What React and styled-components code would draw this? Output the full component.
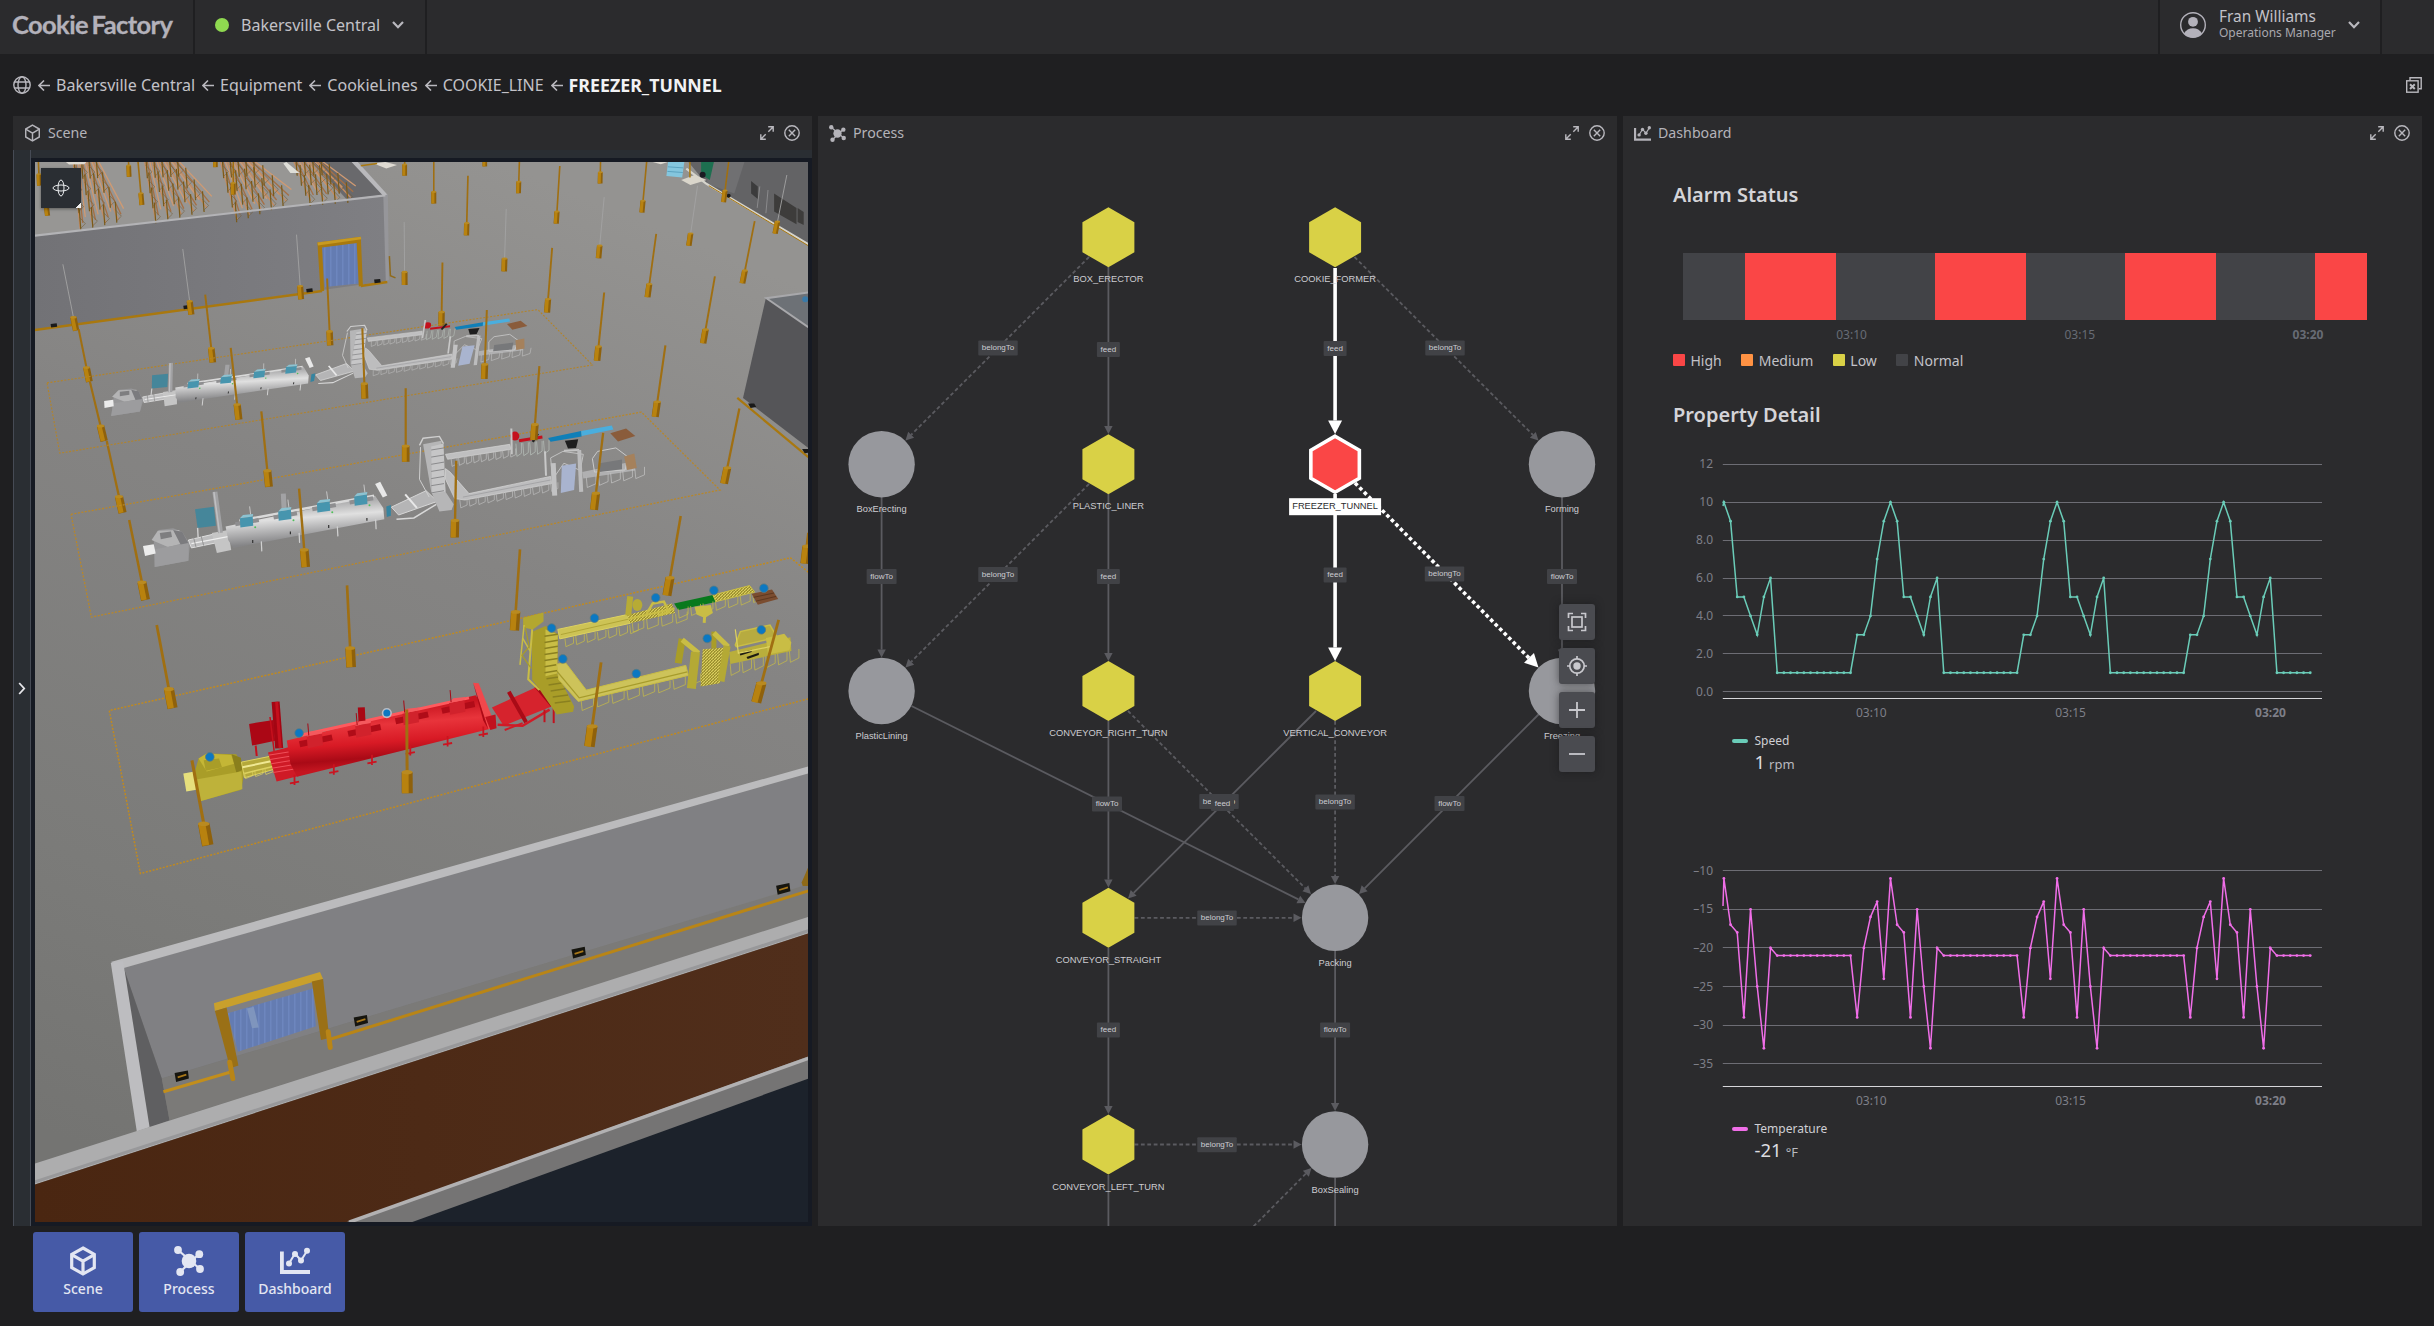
import React from "react";
import styled, { createGlobalStyle, css } from "styled-components";

const Global = createGlobalStyle`
  * { box-sizing: border-box; }
  html, body { margin: 0; padding: 0; background: #1f1f21; }
  body { font-family: "Noto Sans", "Open Sans", sans-serif; color: #c3c2c8; overflow: hidden; }
  button { font: inherit; color: inherit; background: none; border: 0; padding: 0; }
`;

/* ---------- shell ---------- */
const Page = styled.div`
  width: 2434px;
  height: 1326px;
  display: flex;
  flex-direction: column;
  background: #1f1f21;
`;
const TopBar = styled.header`
  height: 54px;
  display: flex;
  background: #2b2b2d;
`;
const Brand = styled.div`
  width: 195px;
  padding: 8px 0 0 12px;
  border-right: 2px solid #1f1f21;
  font-family: Lato, sans-serif;
  font-weight: 700;
  font-size: 25.5px;
  line-height: 32px;
  letter-spacing: -0.6px;
  word-spacing: -2px;
  white-space: nowrap;
  color: #b3b1ba;
  -webkit-text-stroke: 0.3px #b3b1ba;
`;
const Site = styled.div`
  width: 232px;
  height: 54px;
  padding: 0 0 5px 20px;
  display: flex;
  align-items: center;
  border-right: 2px solid #1f1f21;
  font-size: 16px;
  svg { margin-left: 12px; }
`;
const Dot = styled.span`
  width: 14px;
  height: 14px;
  margin-right: 12px;
  border-radius: 50%;
  background: #8fd950;
`;
const Spacer = styled.div`
  flex: 1;
`;
const User = styled.div`
  width: 224px;
  display: flex;
  align-items: center;
  padding: 0 20px 4px 20px;
  border-left: 2px solid #1f1f21;
  border-right: 2px solid #1f1f21;
`;
const UserText = styled.div`
  width: 129px;
  margin-left: 13px;
  padding-bottom: 3px;
  display: flex;
  flex-direction: column;
`;
const UserName = styled.span`
  font-size: 15.4px;
  line-height: 17px;
`;
const UserRole = styled.span`
  font-size: 12px;
  line-height: 15px;
  color: #a9a8ae;
`;
const BarEnd = styled.div`
  width: 52px;
`;
const Crumbs = styled.nav`
  height: 62px;
  padding: 0 12px 0 13px;
  display: flex;
  align-items: center;
  font-size: 16px;
`;
const Home = styled.span`
  display: flex;
  margin-right: 7px;
`;
const Crumb = styled.span`
  margin: 0 7px 0 6px;
  white-space: nowrap;
  ${(p) =>
    p.$current &&
    css`
      font-size: 17.8px;
      font-weight: 700;
      color: #f2f2f4;
    `}
`;
const Columns = styled.main`
  display: grid;
  grid-template-columns: repeat(3, 799px);
  gap: 6px;
  height: 1110px;
  padding-left: 13px;
`;
const Panel = styled.section`
  display: flex;
  flex-direction: column;
  height: 1110px;
  background: #2b2b2d;
  overflow: hidden;
`;
const PanelHead = styled.div`
  height: 34px;
  flex: none;
  display: flex;
  align-items: center;
  padding: 0 12px 0 11px;
  font-size: 14.2px;
  gap: 7px;
  color: #b4b3b9;
`;
const PanelTitle = styled.span`
  padding-bottom: 1px;
`;
const HeadIcons = styled.div`
  margin-left: auto;
  display: flex;
  align-items: center;
  gap: 10px;
`;
const Dock = styled.footer`
  display: flex;
  gap: 6px;
  padding: 6px 0 0 33px;
`;
const DockButton = styled.button`
  width: 100px;
  height: 80px;
  border-radius: 3px;
  background: #465aa7;
  color: #e3e6f2;
  font-size: 14px;
  font-weight: 500;
  line-height: 20px;
  display: flex;
  flex-direction: column;
  align-items: center;
  padding-top: 14px;
  gap: 3px;
`;

/* ---------- icons ---------- */
const Chevron = () => (
  <svg width="12" height="8" viewBox="0 0 12 8" fill="none" stroke="#b9b8be" strokeWidth="2.2">
    <path d="M1 1l5 5.2L11 1" />
  </svg>
);
const Arrow = () => (
  <svg width="12" height="12" viewBox="0 0 12 12" fill="none" stroke="#b9b8be" strokeWidth="1.6">
    <path d="M12 6.5H1M6 1.5L1 6.5l5 5" />
  </svg>
);
const Globe = () => (
  <svg width="18" height="18" viewBox="0 0 18 18" fill="none" stroke="#b9b8be" strokeWidth="1.4">
    <circle cx="9" cy="9" r="8.2" />
    <ellipse cx="9" cy="9" rx="4" ry="8.2" />
    <path d="M1.5 6h15M1.5 12h15" />
  </svg>
);
const CloseAll = () => (
  <svg width="16" height="16" viewBox="0 0 16 16" fill="none" stroke="#b9b8be" strokeWidth="1.4">
    <path d="M4 3.6V.8h11.2v11H12.8" />
    <rect x=".7" y="3.8" width="11.4" height="11.4" />
    <path d="M4 7.2l4.8 4.8M8.8 7.2L4 12" strokeWidth="2" />
  </svg>
);
const Avatar = () => (
  <svg width="26" height="26" viewBox="0 0 26 26">
    <circle cx="13" cy="13" r="12.3" fill="none" stroke="#b3b1ba" strokeWidth="1.4" />
    <circle cx="13" cy="9.8" r="4.9" fill="#b3b1ba" />
    <path d="M4 21.5Q7 16.3 13 16.3T22 21.5Q18.5 25.6 13 25.6T4 21.5z" fill="#b3b1ba" />
  </svg>
);
const Expand = () => (
  <svg width="14" height="14" viewBox="0 0 14 14" fill="none" stroke="#b9b8be" strokeWidth="1.4">
    <path d="M8.2 .8H13.2V5.8M13 1L8.3 5.7M5.8 13.2H.8V8.2M1 13l4.7-4.7" />
  </svg>
);
const Close = () => (
  <svg width="16" height="16" viewBox="0 0 16 16" fill="none" stroke="#b9b8be" strokeWidth="1.4">
    <circle cx="8" cy="8" r="7.2" />
    <path d="M4.8 4.8l6.4 6.4M11.2 4.8l-6.4 6.4" />
  </svg>
);
const CubeIcon = ({ w, h, sw }) => (
  <svg width={w} height={h} viewBox="0 0 26 30" fill="none" stroke="currentColor" strokeWidth={sw}>
    <path d="M13 2L24.3 8.4V21.6L13 28L1.7 21.6V8.4z" />
    <path d="M1.7 8.6L13 15.2L24.3 8.6M13 15.2V28" />
  </svg>
);
const ProcessIcon = ({ s }) => (
  <svg width={s} height={s} viewBox="0 0 30 30" fill="currentColor" stroke="currentColor" strokeWidth="2.2">
    <path d="M4 4L26 23M25 8L6 26" />
    <g stroke="none">
      <circle cx="15" cy="15" r="7.3" />
      <circle cx="4" cy="4" r="3.9" />
      <circle cx="25.3" cy="8.2" r="3.9" />
      <circle cx="26" cy="23" r="3.9" />
      <circle cx="6.2" cy="26" r="3.9" />
    </g>
  </svg>
);
const DashIcon = ({ s }) => (
  <svg width={s} height={s} viewBox="0 0 30 30" fill="none" stroke="currentColor">
    <path d="M1.8 5.5V26H30" strokeWidth="4" />
    <path d="M9 17.5L15 7.5L21 14.5L27 5" strokeWidth="2" />
    <g fill="currentColor" stroke="none">
      <circle cx="9" cy="17.5" r="3" />
      <circle cx="15" cy="8" r="3" />
      <circle cx="21" cy="14.5" r="3" />
      <circle cx="27" cy="4.8" r="3" />
    </g>
  </svg>
);

const PanelHeader = ({ icon, title }) => (
  <PanelHead>
    {icon}
    <PanelTitle>{title}</PanelTitle>
    <HeadIcons>
      <Expand />
      <Close />
    </HeadIcons>
  </PanelHead>
);

/* ---------- scene ---------- */
const SceneBody = styled.div`
  flex: 1;
  display: flex;
`;
const Rail = styled.div`
  width: 18px;
  display: flex;
  align-items: center;
  justify-content: center;
  background: #2a2e33;
  border-left: 1px solid #464b55;
  border-right: 1px solid #464b55;
`;
const ViewerWrap = styled.div`
  flex: 1;
  display: flex;
  flex-direction: column;
  background: #2a2e33;
  padding-top: 8px;
`;
const Viewer = styled.div`
  position: relative;
  flex: 1;
  background: #161a23;
  padding: 4px;
  svg { display: block; }
`;
const OrbitButton = styled.button`
  position: absolute;
  left: 10px;
  top: 10px;
  width: 40px;
  height: 40px;
  display: flex;
  align-items: center;
  justify-content: center;
  background: linear-gradient(135deg, #2a2e33 93%, #f0f0f0 93%);
  box-shadow: 0 1px 3px rgba(0, 0, 0, 0.4);
`;

// Two drafting grids: the far half of the hall and the near half.
const far = (x, y) => [20 + x / 1.96, 140 + y / 2.8];
const near = (x, y) => [20 + x / 1.96, 560 + y / 2.306];
const pts = (map, s) =>
  s
    .split(" ")
    .map((p) => map(...p.split(",").map(Number)).map((n) => n.toFixed(1)).join(","))
    .join(" ");
const F = ({ p, f, s, w }) => <polygon points={pts(far, p)} fill={f || "none"} stroke={s} strokeWidth={w} />;
const N = ({ p, f, s, w }) => <polygon points={pts(near, p)} fill={f || "none"} stroke={s} strokeWidth={w} />;
const FL = ({ p, s, w = 1, d }) => (
  <polyline points={pts(far, p)} fill="none" stroke={s} strokeWidth={w} strokeDasharray={d} />
);
const NL = ({ p, s, w = 1, d, c }) => (
  <polyline points={pts(near, p)} fill="none" stroke={s} strokeWidth={w} strokeDasharray={d} strokeLinecap={c} />
);

const farPoles = [
  [230, 40, 239, 182], [212, 40, 214, 103], [36, 60, 38, 128], [47, 130, 54, 212], [754, 50, 754, 100], [811, 50, 811, 178],
  [878, 100, 875, 267], [911, 40, 911, 74], [383, 40, 383, 76], [979, 50, 977, 149], [1058, 73, 1051, 234],
  [1138, 50, 1137, 122], [1229, 50, 1219, 203], [1390, 50, 1379, 174], [1440, 227, 1416, 401], [418, 60, 418, 153],
  [1247, 263, 1230, 440], [1043, 302, 1033, 483], [828, 343, 826, 520], [602, 388, 608, 575],
  [363, 433, 378, 623], [1362, 382, 1339, 569], [1145, 427, 1131, 618], [1265, 575, 1245, 775],
  [115, 530, 136, 677], [137, 677, 165, 843], [170, 843, 201, 1044],
];
const farWires = [
  [1503, 98, 1480, 262], [1328, 128, 1311, 296], [1145, 160, 1134, 331], [953, 193, 949, 368],
  [753, 230, 754, 406], [542, 265, 551, 446], [319, 305, 336, 489], [84, 348, 110, 534],
];
const midPoles = [
  [915, 476, 910, 669], [671, 527, 676, 724], [413, 582, 429, 783], [1018, 633, 1007, 840],
  [756, 695, 756, 901], [473, 760, 488, 971], [1410, 752, 1380, 962], [1143, 820, 1125, 1035],
  [855, 898, 852, 1113], [547, 976, 560, 1196], [214, 1064, 246, 1288], [1295, 1053, 1268, 1275],
  [980, 1146, 969, 1373], [641, 1247, 649, 1476], [1545, 1100, 1538, 1186],
];
const nearPoles = [
  [268, 150, 299, 342], [1139, 236, 1116, 430], [1487, 138, 1443, 328], [758, 345, 759, 538], [337, 462, 368, 658],
];

const Pole = ({ a, b, wire }) => {
  const t = (b[1] - 160) / 690;
  const w = 4.6 + t * 7;
  const h = 11 + t * 11;
  const len = Math.hypot(a[0] - b[0], a[1] - b[1]);
  const ux = (b[0] - a[0]) / len;
  const uy = (b[1] - a[1]) / len;
  const top = [b[0] - ux * h, b[1] - uy * h];
  return (
    <g>
      <line x1={a[0]} y1={a[1]} x2={top[0]} y2={top[1]} stroke={wire ? "#a3a3a3" : "#a06f12"} strokeWidth={wire ? 0.9 : 1.5 + t * 1.6} />
      <line x1={top[0]} y1={top[1]} x2={b[0]} y2={b[1]} stroke="#8f610b" strokeWidth={w} />
      <line x1={top[0] - w / 6} y1={top[1]} x2={b[0] - w / 6} y2={b[1]} stroke="#b8820f" strokeWidth={w * 0.6} />
      <ellipse cx={top[0]} cy={top[1]} rx={w / 2} ry={w / 5} fill="#b98a20" />
    </g>
  );
};

const racks = [
  { x: 104, n: 4, dx: 13, len: 190, slant: 14, fan: 12, drop: 8 },
  { x: 244, n: 5, dx: 14, len: 168, slant: 22, fan: 11, drop: 9 },
  { x: 392, n: 5, dx: 14, len: 165, slant: 34, fan: 10, drop: 13 },
  { x: 536, n: 4, dx: 15, len: 112, slant: 34, fan: 11, drop: 3 },
];
const Rack = ({ x, n, dx, len, slant, fan, drop }) => {
  const top = 58;
  const out = [];
  for (let i = 0; i < n; i++) {
    const x0 = x + i * dx;
    const lean = slant + fan * i;
    const run = len - drop * i;
    for (let k = 0; k < 3; k++) {
      const s = x0 + k * 5;
      out.push(<FL key={`b${i}${k}`} p={`${s},${top} ${s + lean},${top + run - k * 16}`} s={["#c68c60", "#a56f45", "#d09a72"][k]} w={1.3} />);
    }
    for (let j = 0; j < 4; j++) {
      const y = top + (run / 4) * (j + 0.5);
      const px = x0 + (lean * (y - top)) / run;
      out.push(<FL key={`p${i}${j}`} p={`${px},${y - 30} ${px + 3},${y + 28}`} s="#7a5a18" w={1.2} />);
      out.push(<FL key={`x${i}${j}`} p={`${px},${y - 8} ${px + 12},${y + 10} ${px + 2},${y + 24}`} s="#75603a" w={0.6} />);
    }
  }
  return <g>{out}</g>;
};

const Legs = ({ map, from, to, n, h, s }) =>
  Array.from({ length: n }, (_, i) => {
    const t = i / (n - 1);
    const x = from[0] + (to[0] - from[0]) * t;
    const y = from[1] + (to[1] - from[1]) * t;
    const dx = (to[0] - from[0]) / (n - 1);
    const dy = (to[1] - from[1]) / (n - 1);
    return (
      <polyline
        key={i}
        fill="none"
        stroke={s}
        strokeWidth="0.7"
        points={pts(map, `${x},${y} ${x + 2},${y + h} ${x + dx * 0.8},${y + dy * 0.8 + h * 0.8} ${x + dx * 0.8},${y + dy * 0.8}`)}
      />
    );
  });

const WhiteLine = () => (
  <g>
    <F p="262,1118 272,1092 300,1087 318,1097 333,1133 330,1178 264,1196" f="#969698" />
    <F p="258,1120 270,1094 312,1092 322,1128 290,1140" f="#b4b4b5" />
    <F p="274,1100 296,1096 298,1112 276,1118" f="#7e7e80" />
    <F p="300,1092 318,1097 330,1130 316,1136" f="#7b7b7e" />
    <F p="264,1146 330,1128 330,1178 264,1196" f="#9c9c9e" />
    <F p="241,1137 262,1132 266,1158 245,1165" f="#ececec" />
    <F p="330,1120 378,1104 384,1128 336,1142" f="#bdbdbe" s="#dedede" w={1} />
    <F p="376,1100 408,1092 414,1148 386,1156" f="#c5c5c5" />
    <FL p="336,1130 410,1110" s="#eeeeee" w={1.2} />
    <FL p="340,1112 345,1140" s="#888888" w={0.8} />
    <FL p="355,1108 360,1136" s="#888888" w={0.8} />
    <FL p="382,985 393,1100" s="#a2a2a4" w={5} />
    <FL p="380,985 391,1100" s="#c0c0c2" w={1.5} />
    <F p="343,1034 380,1027 384,1080 348,1086" f="#45869a" />
    <FL p="348,1086 349,1112" s="#cfcfcf" w={1.4} />
    <F p="403,1082 696,996 712,1030 714,1062 418,1142 408,1120" f="url(#tube)" />
    <FL p="430,1066 694,996" s="#d9d9d9" w={2.5} />
    <FL p="516,990 518,1044" s="#a2a2a4" w={5} />
    {[[444, 1070], [519, 1051], [595, 1028], [668, 1009]].map(([x, y], i) => (
      <g key={i}>
        <FL p={`${x - 22},${y + 6} ${x + 24},${y - 6}`} s="#8e8e90" w={4} />
        <F p={`${x - 13},${y - 11} ${x + 12},${y - 16} ${x + 13},${y + 10} ${x - 12},${y + 15}`} f="#4795ae" />
        <F p={`${x - 13},${y - 11} ${x - 7},${y - 20} ${x + 13},${y - 23} ${x + 12},${y - 16}`} f="#8cc3d2" />
        <FL p={`${x + 8},${y - 22} ${x + 6},${y - 44}`} s="#c4c4c4" w={1} />
        <circle cx={far(x + 17, y + 14)[0]} cy={far(x, y + 14)[1]} r="1" fill="#4fbf5a" />
      </g>
    ))}
    {[[456, 1128], [530, 1104], [605, 1086], [680, 1066]].map(([x, y], i) => (
      <g key={i}>
        <FL p={`${x},${y - 8} ${x},${y}`} s="#333333" w={1.2} />
        <FL p={`${x + 17},${y - 4} ${x + 18},${y + 24}`} s="#d0d0d0" w={1.2} />
      </g>
    ))}
    <F p="696,963 706,957 720,995 711,1001" f="#e8e8e8" />
    <F p="718,1026 727,1022 727,1052 719,1056" f="#3684a0" />
    <F p="728,1028 796,982 818,1012 742,1050" f="#b5b5b6" s="#d6d6d6" w={1} />
    <FL p="755,992 778,1030" s="#e8e8e8" w={2} />
    <FL p="738,1062 772,1058 816,1020" s="#d8d8d8" w={1.5} />
    <F p="790,852 826,842 834,985 850,1020 846,1036 822,1040 806,985" f="#b6b6b7" />
    <F p="806,858 830,850 834,985 808,990" f="#c6c6c7" />
    {[0, 1, 2, 3, 4, 5, 6].map((i) => (
      <FL key={i} p={`${806},${868 + i * 20} ${831},${862 + i * 20}`} s="#8a8a8c" w={1} />
    ))}
    <FL p="785,860 783,950 802,1000" s="#cfcfcf" w={1} />
    <FL p="783,855 790,835 822,830 830,850" s="#cfcfcf" w={1.4} />
    <F p="834,880 960,852 962,866 838,894" f="#bfbfc0" s="#d4d4d4" w={0.7} />
    <Legs map={far} from={[845, 892]} to={[960, 866]} n={9} h={22} s="#bebebe" />
    <F p="834,920 843,930 880,990 1040,942 1042,962 872,1008 852,1004 834,950" f="#bdbdbe" s="#d8d8d8" w={0.7} />
    <FL p="868,1000 1040,952" s="#a4a4a6" w={1} />
    <Legs map={far} from={[862, 1008]} to={[1040, 962]} n={11} h={22} s="#bcbcbc" />
    <circle cx={far(970, 0)[0]} cy={far(0, 829)[1]} r="4.5" fill="#c4101c" />
    <FL p="963,808 964,880" s="#c4c4c4" w={2} />
    <FL p="978,842 1024,832" s="#c4101c" w={3} />
    <FL p="1005,845 1015,822" s="#222222" w={2.5} />
    <Legs map={far} from={[972, 850]} to={[1026, 842]} n={5} h={36} s="#b9c2bb" />
    <F p="1035,834 1100,815 1101,830 1040,845" f="#0f7fb8" />
    <F p="1100,815 1160,799 1163,811 1101,829" f="#4aaede" />
    <F p="1068,842 1094,838 1090,862 1074,864" f="#1e1e1e" />
    <F p="1157,821 1188,808 1206,829 1172,844" f="#8a5c3b" />
    <F p="1040,890 1064,872 1104,880 1098,925 1066,905 1044,950" s="#c2c2c2" w={1} />
    <F p="1062,912 1090,906 1086,980 1060,988" f="#a9b4cf" />
    <FL p="1029,872 1031,940" s="#c8c8c8" w={2} />
    <FL p="1045,905 1048,996" s="#c2c2c3" w={5} />
    <FL p="1066,870 1096,868" s="#c4c4c4" w={2} />
    <FL p="1096,868 1100,985" s="#bcbcbd" w={4} />
    <F p="1102,930 1200,900 1206,925 1104,948" f="#b0b0b1" />
    <F p="1122,892 1132,872 1168,862 1192,888 1186,924 1126,930" s="#cacaca" w={1} />
    <F p="1136,905 1180,895 1180,922 1136,930" f="#77787a" />
    <F p="1184,886 1204,878 1209,918 1190,924" f="#a5815c" />
    <Legs map={far} from={[1110, 945]} to={[1205, 920]} n={5} h={28} s="#c4c4c4" />
  </g>
);

const ActiveLine = () => {
  const y1 = "#c9bd45";
  const y2 = "#a99d28";
  const y3 = "#ddd260";
  return (
    <g>
      <N p="342,490 350,458 366,446 424,448 440,486 434,530 350,557" f={y2} />
      <N p="350,458 366,446 414,450 420,470 366,488" f="#c4b636" />
      <N p="360,462 390,458 396,478 364,486" f={y2} />
      <N p="415,448 433,456 436,484 424,490" f="#8a7f1c" />
      <N p="345,506 434,488 436,528 352,557" f="#beb23a" />
      <N p="320,492 342,488 346,530 326,534" f="#e6df7c" />
      <N p="434,466 502,450 512,478 440,502" f="#b4a83a" s={y3} w={1} />
      <NL p="436,478 508,460" s="#efe892" w={2} />
      <NL p="440,492 510,472" s={y3} w={1.5} />
      <Legs map={near} from={[440, 490]} to={[500, 476]} n={4} h={14} s={y3} />

      <N p="486,444 526,432 546,498 503,511" f="#cf1a26" />
      {[0, 1, 2, 3, 4].map((i) => (
        <NL key={i} p={`${488 + i * 2},${450 + i * 10} ${530 + i * 2},${442 + i * 10}`} s="#f0505a" w={1} />
      ))}
      <NL p="501,327 508,434" s="#a30613" w={8} />
      <NL p="503,327 510,434" s="#c5101d" w={3} />
      <N p="449,378 497,369 500,417 455,428" f="#ab0715" />
      <NL p="462,428 464,452" s="#c5101d" w={2} />
      <NL p="490,362 498,440" s="#c5101d" w={1.5} />
      <N p="523,416 893,312 914,345 920,390 543,500 530,470" f="url(#tubeRed)" />
      <NL p="550,404 880,318" s="#ff5a5e" w={3} />
      <NL p="669,340 671,388" s="#a90814" w={7} />
      {[[578, 415], [673, 391], [766, 362], [857, 338]].map(([x, y], i) => (
        <g key={i}>
          <NL p={`${x - 30},${y + 10} ${x + 34},${y - 6}`} s="#b00c18" w={6} />
          <N p={`${x - 16},${y - 8} ${x + 14},${y - 15} ${x + 16},${y + 12} ${x - 14},${y + 19}`} f="#d1222c" />
          <N p={`${x - 16},${y - 8} ${x - 8},${y - 19} ${x + 16},${y - 22} ${x + 14},${y - 15}`} f="#f4595e" />
          <NL p={`${x - 12},${y - 10} ${x - 14},${y - 38}`} s="#a40a16" w={1} />
        </g>
      ))}
      {[[538, 513], [615, 489], [690, 467], [765, 445], [838, 424], [908, 402]].map(([x, y], i) => (
        <NL key={i} p={`${x},${y - 18} ${x},${y + 6} ${x},${y} ${x - 9},${y + 2} ${x + 9},${y - 2}`} s="#cb1420" w={1.8} />
      ))}
      <N p="888,283 899,284 932,382 918,391" f="#f1484c" />
      <N p="888,283 918,391 908,370" f="#ad0a16" />
      <N p="925,340 1018,290 1046,328 1042,338 948,382" f="#d6232d" />
      <N p="1008,293 1034,296 1047,330 1040,338" f="#a20814" />
      <NL p="958,304 992,374" s="#a90b17" w={4} />
      <NL p="936,380 985,382 1038,345" s="#d01b27" w={2.5} />
      <NL p="950,392 985,376" s="#d01b27" w={2} />
      <NL p="1028,345 1028,374" s="#c1121e" w={2} />
      <NL p="1046,338 1046,376" s="#c1121e" w={2} />
      <N p="912,362 932,356 934,388 922,392" f="#c1121e" />

      <N p="1003,166 1030,152 1054,172 1053,262 1086,338 1084,350 1052,356 1018,298 1004,276" f={y2} />
      <N p="1030,160 1054,172 1053,262 1030,268" f={y1} />
      <N p="986,133 1026,121 1026,142 1005,160 986,156" f="#b3a730" />
      {Array.from({ length: 12 }, (_, i) => (
        <NL key={i} p={`${1028 + Math.max(0, i - 6) * 4},${176 + i * 14} ${1054 + Math.max(0, i - 6) * 5},${171 + i * 14}`} s="#8a8020" w={1.5} />
      ))}
      <NL p="988,150 980,242" s={y1} w={1.5} />
      <NL p="985,180 1000,210" s={y1} w={1.5} />
      <NL p="1004,160 996,275 1018,300" s={y1} w={2} />
      <NL p="990,155 998,200 984,220 1002,250" s={y2} w={1.2} />
      <N p="1054,160 1190,126 1196,146 1058,182" f="#cdc355" s={y3} w={1} />
      <NL p="1060,172 1194,136" s="#b0a536" w={1} />
      <Legs map={near} from={[1068, 180]} to={[1195, 150]} n={7} h={20} s={y1} />
      <N p="1052,240 1070,238 1110,300 1305,243 1310,266 1094,326 1056,276" f="#cdc35a" s={y1} w={1} />
      <NL p="1052,256 1096,318 1308,258" s="#a69b2c" w={1.2} />
      <Legs map={near} from={[1100, 325]} to={[1310, 268]} n={8} h={22} s={y1} />
      <N p="1190,127 1278,100 1284,122 1196,146" f="url(#hatch)" />
      <NL p="1192,136 1283,112" s={y1} w={2} />
      <NL p="1196,84 1192,128" s="#b7ab35" w={6} />
      <ellipse cx={near(1210, 0)[0]} cy={near(0, 104)[1]} rx="5" ry="6" fill="#b7ab35" />
      <NL p="1228,124 1240,100 1262,96 1272,120 1250,128" s={y1} w={2.5} />
      <Legs map={near} from={[1200, 144]} to={[1285, 124]} n={4} h={22} s={y1} />
      <N p="1282,100 1358,81 1364,97 1290,115" f="#08791d" />
      <N p="1358,81 1430,59 1440,74 1364,96" f="url(#hatch)" s={y1} w={1} />
      <Legs map={near} from={[1290, 112]} to={[1436, 76]} n={7} h={22} s={y1} />
      <N p="1322,108 1354,104 1358,122 1342,134 1326,126" f={y1} />
      <NL p="1342,128 1341,145" s={y1} w={3} />
      <N p="1434,78 1474,68 1486,90 1446,103" f="#7b4d30" />
      <NL p="1438,86 1478,76" s="#5e3820" w={1} />
      <NL p="1442,95 1482,84" s="#5e3820" w={1} />

      <N p="1338,206 1380,202 1372,284 1334,292" f="url(#hatch)" />
      <NL p="1298,182 1290,238" s={y2} w={7} />
      <NL p="1298,184 1330,215" s={y1} w={5} />
      <NL p="1324,212 1316,296" s="#b4a935" w={9} />
      <NL p="1360,165 1360,204" s={y2} w={5} />
      <NL p="1360,168 1388,200" s={y1} w={5} />
      <NL p="1386,198 1374,280" s="#b4a935" w={7} />
      <N p="1390,212 1510,178 1512,210 1392,240" f="#b9ae3c" />
      <N p="1402,196 1412,165 1470,150 1484,178 1404,200" f="#b7ab40" s={y1} w={1.5} />
      <N p="1462,180 1498,170 1512,190 1508,208 1466,218" f={y1} />
      <N p="1410,214 1434,207 1434,212 1412,220" f="#1d1c12" />
      <N p="1424,224 1448,214 1448,219 1426,228" f="#1d1c12" />
      <NL p="1402,160 1408,215 1470,200" s={y3} w={1.2} />
      <Legs map={near} from={[1392, 240]} to={[1508, 210]} n={6} h={26} s={y1} />
    </g>
  );
};

const markers = [
  [372, 454], [547, 399], [719, 353], [1042, 157], [1064, 228], [1126, 134],
  [1208, 262], [1246, 87], [1347, 181], [1360, 70], [1453, 161], [1458, 65],
];

const Scene = () => (
  <svg width="773" height="1060" viewBox="35 162 773 1060">
    <defs>
      <linearGradient id="floor" x1="0.6" y1="0" x2="0.3" y2="1">
        <stop offset="0" stopColor="#949391" />
        <stop offset="0.35" stopColor="#858483" />
        <stop offset="0.75" stopColor="#7b7b79" />
        <stop offset="1" stopColor="#747472" />
      </linearGradient>
      <linearGradient id="tube" x1="0.4" y1="0.2" x2="0.55" y2="0.85">
        <stop offset="0" stopColor="#aeaeaf" />
        <stop offset="0.35" stopColor="#e0e0e0" />
        <stop offset="0.6" stopColor="#bcbcbd" />
        <stop offset="1" stopColor="#858587" />
      </linearGradient>
      <linearGradient id="tubeRed" x1="0.42" y1="0.15" x2="0.55" y2="0.85">
        <stop offset="0" stopColor="#c8141f" />
        <stop offset="0.3" stopColor="#e8343b" />
        <stop offset="0.6" stopColor="#d81a25" />
        <stop offset="0.85" stopColor="#a90a16" />
        <stop offset="1" stopColor="#c41520" />
      </linearGradient>
      <linearGradient id="brown" x1="0" y1="0" x2="1" y2="0">
        <stop offset="0" stopColor="#4a2611" />
        <stop offset="1" stopColor="#502e1b" />
      </linearGradient>
      <linearGradient id="wallA" x1="0" y1="0" x2="1" y2="0">
        <stop offset="0" stopColor="#727276" />
        <stop offset="1" stopColor="#7f7f83" />
      </linearGradient>
      <pattern id="hatch" width="3" height="3" patternUnits="userSpaceOnUse">
        <rect width="3" height="3" fill="#978b2c" />
        <path d="M0 3L3 0" stroke="#ddd260" strokeWidth="1.2" />
      </pattern>
      <pattern id="curtain" width="6" height="6" patternUnits="userSpaceOnUse">
        <rect width="6" height="6" fill="#647cb2" />
        <rect width="1.5" height="6" fill="#6d86be" />
      </pattern>
    </defs>
    <rect x="35" y="162" width="773" height="1060" fill="url(#floor)" />

    <F p="29,268 717,155 720,395 29,532" f="url(#wallA)" />
    <F p="29,62 560,62 640,166 29,266" f="#979694" />
    <F p="575,62 655,62 712,154 640,166" f="#69696c" />
    {racks.map((r) => (
      <Rack key={r.x} {...r} />
    ))}
    <F p="712,156 721,152 723,392 717,396" f="#96969a" />
    <FL p="29,268 716,155" s="#b3b3b6" w={2.2} />
    <F p="650,62 662,62 720,153 712,157" f="#b9b9bc" />
    <FL p="29,532 592,423" s="#a9780f" w={2.5} />
    <FL p="668,409 720,398" s="#a9780f" w={2.5} />
    <F p="592,300 661,288 664,402 598,412" f="url(#curtain)" />
    <F p="583,287 668,271 672,408 664,410 660,288 592,301 596,422 589,425" f="#a8790f" />
    <F p="583,287 668,271 669,278 584,295" f="#c79a22" />
    {[[66, 519], [326, 468], [567, 421], [700, 395]].map(([x, y], i) => (
      <F key={i} p={`${x - 6},${y - 4} ${x + 6},${y - 6} ${x + 7},${y + 4} ${x - 5},${y + 6}`} f="#1a1a1a" />
    ))}
    <F p="516,66 522,62 548,92 530,92" f="#deded8" />
    <FL p="724,325 726,380 736,386" s="#8f6a1c" w={1.5} />

    <F p="1310,62 1545,62 1545,290 1345,122" f="#636365" />
    <F p="1358,62 1420,62 1400,150 1345,122" f="#707072" />
    <F p="1335,62 1360,62 1352,112 1335,96" f="#1d6f50" />
    <FL p="1306,80 1345,122 1545,292" s="#d6d4cc" w={2.2} />
    <FL p="1350,128 1545,296" s="#a9780f" w={1} />
    <F p="1433,115 1446,130 1446,165 1433,150" f="#3b3b3c" />
    <F p="1478,150 1522,190 1522,236 1478,200" f="#3d3c3b" />
    <F p="1524,190 1536,202 1536,238 1524,230" f="#3d3c3b" />
    <FL p="1450,130 1445,190" s="#8a8a8c" w={1} />
    <FL p="1466,140 1462,205" s="#8a8a8c" w={1} />
    <F p="1270,62 1302,62 1298,105 1267,101" f="#84c6de" />
    <FL p="1270,75 1300,78" s="#5ba3c0" w={1} />
    <FL p="1269,88 1299,91" s="#5ba3c0" w={1} />
    <F p="1296,112 1322,98 1346,112 1314,126" f="#dad6cb" />
    <F p="693,66 718,80 739,70 716,62" f="#dedad2" />
    <F p="90,62 130,62 126,68 96,69" f="#dedad2" />
    <F p="1240,62 1270,62 1256,68" f="#dedad2" />
    <FL p="668,72 700,66" s="#a9780f" w={1.5} />
    <FL p="1313,62 1313,105" s="#a9780f" w={1.5} />
    <circle cx={far(1338, 0)[0]} cy={far(0, 97)[1]} r="3" fill="#1a1c22" />
    <circle cx={far(1389, 0)[0]} cy={far(0, 156)[1]} r="2" fill="#1a1a1a" />

    {farWires.map((p, i) => (
      <Pole key={i} a={far(p[0], p[1])} b={far(p[2], p[3])} wire />
    ))}
    {farPoles.map((p, i) => (
      <Pole key={i} a={far(p[0], p[1])} b={far(p[2], p[3])} />
    ))}

    <F p="1462,442 1545,427 1545,525" f="#6d7176" />
    <F p="1462,442 1545,523 1545,862 1417,722" f="#555558" />
    <FL p="1545,427 1463,443 1545,524" s="#a8a8ab" w={2} />
    <circle cx={far(1539, 0)[0]} cy={far(0, 446)[1]} r="3" fill="#3a7aa8" />
    <FL p="1406,722 1545,888" s="#a9780f" w={2.2} />
    {[[1435, 744], [1541, 871]].map(([x, y], i) => (
      <F key={i} p={`${x - 8},${y - 6} ${x + 4},${y - 6} ${x + 8},${y + 4} ${x - 3},${y + 6}`} f="#191919" />
    ))}

    <FL p="53,680 1015,475 1122,630 78,877 53,680" s="#b3842a" w={1.1} d="2 1.5" />
    <FL p="100,1048 1218,762 1372,980 140,1336 100,1048" s="#b8872a" w={1.3} d="2 1.5" />
    <NL p="1545,28 1510,-5 175,347 236,723 1545,320" s="#c08a20" w={1.5} d="2 1.5" />

    <g transform="translate(20 140) scale(0.510204 0.357143) matrix(0.831 0.008 -0.09 0.706 66.9 -73.9) scale(1.96 2.8) translate(-20 -140)">
      <WhiteLine />
    </g>
    <WhiteLine />
    {midPoles.map((p, i) => (
      <Pole key={i} a={far(p[0], p[1])} b={far(p[2], p[3])} />
    ))}
    <ActiveLine />
    {nearPoles.map((p, i) => (
      <Pole key={i} a={near(p[0], p[1])} b={near(p[2], p[3])} />
    ))}
    {markers.map(([x, y], i) => {
      const [cx, cy] = near(x, y);
      return <circle key={i} cx={cx} cy={cy} r="4.3" fill="#0b78c2" stroke={i === 2 ? "#b9bcc4" : "#5a7a80"} strokeWidth={i === 2 ? 1.6 : 0.8} />;
    })}

    <N p="203,940 1545,492 1545,748 278,1196" f="#808083" />
    <N p="203,940 278,1196 293,1292 252,1310" f="#5f5f61" />
    <N p="278,1196 1545,748 1545,826 293,1292" f="#7b7a78" />
    <N p="178,927 1545,476 1545,492 200,942" f="#bbbbbd" />
    <N p="178,929 202,925 254,1308 229,1318" f="#bdbdc0" />
    <NL p="281,1226 415,1180" s="#c28e1c" w={3} />
    <NL p="608,1105 1545,763" s="#b98516" w={3} />
    <N p="407,1045 574,988 580,1075 427,1134" f="url(#curtain)" />
    <N p="445,1034 458,1030 468,1078 455,1080" f="#7f95bd" />
    <N p="380,1022 588,950 594,966 382,1040" f="#c9a02c" />
    <N p="382,1040 405,1032 428,1166 412,1172" f="#9a7016" />
    <N p="572,972 594,966 606,1102 590,1107" f="#9a7016" />
    <NL p="411,1158 417,1196" s="#b98516" w={5} c="round" />
    <NL p="604,1088 608,1124" s="#b98516" w={5} c="round" />
    <N p="1545,708 1532,744 1534,752 1545,752" f="#8f6a18" />
    {[[317, 1190], [668, 1062], [1095, 905], [1496, 758]].map(([x, y], i) => (
      <g key={i}>
        <N p={`${x - 14},${y - 7} ${x + 12},${y - 13} ${x + 14},${y + 6} ${x - 11},${y + 14}`} f="#16150f" />
        <NL p={`${x - 8},${y + 3} ${x + 9},${y - 3}`} s="#a9781a" w={1.8} />
      </g>
    ))}
    <N p="29,1392 1545,823 1545,861 29,1440" f="#adadae" />
    <NL p="29,1434 1545,855" s="#98989a" w={3} />
    <N p="29,1440 1545,861 1545,1147 640,1527 29,1527" f="url(#brown)" />
    <N p="640,1527 1545,1145 1545,1196 768,1527" f="#757474" />
    <NL p="645,1527 1545,1149" s="#b2b1b2" w={3.5} />
    <N p="768,1527 1545,1196 1545,1527" f="#1c222b" />
  </svg>
);

const ScenePanel = () => (
  <Panel>
    <PanelHeader icon={<CubeIcon w={17} h={18} sw={2.4} />} title="Scene" />
    <SceneBody>
      <Rail>
        <svg width="8" height="13" viewBox="0 0 8 13" fill="none" stroke="#e6e6ea" strokeWidth="1.8">
          <path d="M1.2 1l5 5.5l-5 5.5" />
        </svg>
      </Rail>
      <ViewerWrap>
        <Viewer>
          <Scene />
          <OrbitButton>
            <svg width="18" height="18" viewBox="0 0 18 18" fill="none" stroke="#eef0f2" strokeWidth="1">
              <ellipse cx="9" cy="9" rx="8" ry="3" />
              <ellipse cx="9" cy="9" rx="3" ry="8" />
            </svg>
          </OrbitButton>
        </Viewer>
      </ViewerWrap>
    </SceneBody>
  </Panel>
);

/* ---------- process graph ---------- */
const GraphBody = styled.div`
  position: relative;
  height: 1076px;
  svg { display: block; }
`;
const Tools = styled.div`
  position: absolute;
  left: 741px;
  top: 454px;
  display: flex;
  flex-direction: column;
  gap: 8px;
`;
const Tool = styled.button`
  width: 36px;
  height: 36px;
  display: flex;
  align-items: center;
  justify-content: center;
  border-radius: 3px;
  background: #4a4b50;
  box-shadow: 0 0 8px rgba(20, 20, 22, 0.55);
`;
const GraphText = styled.text`
  font-family: "Liberation Sans", Arial, sans-serif;
  font-size: ${(p) => p.$size || 9.3}px;
  text-anchor: middle;
  fill: ${(p) => p.$fill || "#cdcdd2"};
`;

const X = [881.6, 1108.4, 1335.1, 1562];
const Y = [237.3, 464.2, 691, 917.8, 1144.5];
const nodes = [
  { c: 1, r: 0, n: "BOX_ERECTOR" },
  { c: 2, r: 0, n: "COOKIE_FORMER" },
  { c: 0, r: 1, n: "BoxErecting", k: 1 },
  { c: 1, r: 1, n: "PLASTIC_LINER" },
  { c: 2, r: 1, n: "FREEZER_TUNNEL", on: 1 },
  { c: 3, r: 1, n: "Forming", k: 1 },
  { c: 0, r: 2, n: "PlasticLining", k: 1 },
  { c: 1, r: 2, n: "CONVEYOR_RIGHT_TURN" },
  { c: 2, r: 2, n: "VERTICAL_CONVEYOR" },
  { c: 3, r: 2, n: "Freezing", k: 1 },
  { c: 1, r: 3, n: "CONVEYOR_STRAIGHT" },
  { c: 2, r: 3, n: "Packing", k: 1 },
  { c: 1, r: 4, n: "CONVEYOR_LEFT_TURN" },
  { c: 2, r: 4, n: "BoxSealing", k: 1 },
];
// x1 y1 x2 y2 label labelX labelY dashed strong
const edges = [
  [1089, 257, 905.5, 440.5, "belongTo", 998, 348, 1],
  [1108.4, 267, 1108.4, 434, "feed", 1108.4, 349.5],
  [1335.1, 268, 1335.1, 434, "feed", 1335.1, 348.5, 0, 1],
  [1354.5, 257, 1538.5, 440.5, "belongTo", 1445, 348, 1],
  [881.6, 497, 881.6, 657.5, "flowTo", 881.6, 576.5],
  [1089, 484, 905.5, 667.5, "belongTo", 998, 574.5, 1],
  [1108.4, 494, 1108.4, 661, "feed", 1108.4, 576.5],
  [1335.1, 494, 1335.1, 661, "feed", 1335.1, 575, 0, 1],
  [1355, 483, 1538.5, 667.5, "belongTo", 1444.5, 574, 1, 1],
  [1562, 497, 1562, 657.5, "flowTo", 1562, 576.5],
  [911.5, 706, 1305.5, 903, "flowTo", 1107, 804],
  [1108.4, 721, 1108.4, 887.5, "", 0, 0],
  [1128, 711, 1311, 894, "belongTo", 1219, 801.5, 1],
  [1316, 711, 1128, 898.5, "feed", 1222.5, 803.5],
  [1335.1, 721, 1335.1, 884, "belongTo", 1335.1, 802, 1],
  [1538.5, 714.5, 1359, 894, "flowTo", 1449.5, 803.5],
  [1134.5, 917.8, 1301.5, 917.8, "belongTo", 1217, 918, 1],
  [1108.4, 948, 1108.4, 1114, "feed", 1108.4, 1030],
  [1335.1, 951, 1335.1, 1111, "flowTo", 1335.1, 1030],
  [1134.5, 1144.5, 1301.5, 1144.5, "belongTo", 1217, 1144.8, 1],
  [1108.4, 1175, 1108.4, 1240, "", 0, 0],
  [1335.1, 1178, 1335.1, 1240, "", 0, 0],
  [1240, 1240, 1311.5, 1168, "", 0, 0, 1],
];
const boxW = { belongTo: 39.5, feed: 23, flowTo: 30 };

const EdgeLine = ({ e }) => {
  const [x1, y1, x2, y2, , , , dash, strong] = e;
  const len = Math.hypot(x2 - x1, y2 - y1);
  const ux = (x2 - x1) / len;
  const uy = (y2 - y1) / len;
  const L = strong ? 13.5 : 8;
  const W = strong ? 7 : 4.2;
  const bx = x2 - ux * L;
  const by = y2 - uy * L;
  const col = strong ? "#ffffff" : "#5b5b60";
  const dashes = strong ? "3.6 2.8" : "3.8 2.6";
  return (
    <g>
      <line x1={x1} y1={y1} x2={bx} y2={by} stroke={col} strokeWidth={strong ? 3.6 : 1.8} strokeDasharray={dash ? dashes : undefined} />
      <polygon points={`${x2},${y2} ${bx - uy * W},${by + ux * W} ${bx + uy * W},${by - ux * W}`} fill={col} />
    </g>
  );
};
const hex = (cx, cy, r) =>
  [-90, -30, 30, 90, 150, 210].map((a) => `${cx + r * Math.cos((a * Math.PI) / 180)},${cy + r * Math.sin((a * Math.PI) / 180)}`).join(" ");

const ProcessPanel = () => (
  <Panel>
    <PanelHeader icon={<ProcessIcon s={17} />} title="Process" />
    <GraphBody>
      <svg width="799" height="1076" viewBox="818 150 799 1076">
        {edges.map((e, i) => (
          <EdgeLine key={i} e={e} />
        ))}
        {edges.map((e, i) =>
          e[4] ? (
            <g key={i}>
              <rect x={e[5] - boxW[e[4]] / 2} y={e[6] - 7.5} width={boxW[e[4]]} height="15" rx="1" fill="#414246" />
              <GraphText x={e[5]} y={e[6] + 2.4} $size={8}>
                {e[4]}
              </GraphText>
            </g>
          ) : null
        )}
        {nodes.map((n) => {
          const cx = X[n.c];
          const cy = Y[n.r];
          return (
            <g key={n.n}>
              {n.k ? (
                <circle cx={cx} cy={cy} r="33.2" fill="#97989d" />
              ) : (
                <polygon points={hex(cx, cy, n.on ? 28 : 30)} fill={n.on ? "#fa4646" : "#d9d146"} stroke={n.on ? "#ffffff" : "none"} strokeWidth="3.6" />
              )}
              {n.on && <rect x={cx - 46} y={cy + 34} width="92" height="17" fill="#ffffff" />}
              <GraphText x={cx} y={cy + (n.k ? 48 : 45)} $fill={n.on ? "#2b2b2d" : undefined}>
                {n.n}
              </GraphText>
            </g>
          );
        })}
      </svg>
      <Tools>
        <Tool>
          <svg width="20" height="20" viewBox="0 0 20 20" fill="none" stroke="#c8c8cd" strokeWidth="1.7">
            <path d="M1.5 6V1.5H6M14 1.5h4.5V6M18.5 14v4.5H14M6 18.5H1.5V14" />
            <rect x="5" y="5" width="10" height="10" />
          </svg>
        </Tool>
        <Tool>
          <svg width="20" height="20" viewBox="0 0 20 20" fill="none" stroke="#c8c8cd" strokeWidth="1.7">
            <circle cx="10" cy="10" r="7.2" />
            <circle cx="10" cy="10" r="3.7" fill="#c8c8cd" stroke="none" />
            <path d="M10 0v3M10 17v3M0 10h3M17 10h3" />
          </svg>
        </Tool>
        <Tool>
          <svg width="16" height="16" viewBox="0 0 16 16" stroke="#c8c8cd" strokeWidth="1.8">
            <path d="M8 0v16M0 8h16" />
          </svg>
        </Tool>
        <Tool>
          <svg width="16" height="16" viewBox="0 0 16 16" stroke="#c8c8cd" strokeWidth="1.8">
            <path d="M0 8h16" />
          </svg>
        </Tool>
      </Tools>
    </GraphBody>
  </Panel>
);

/* ---------- dashboard ---------- */
const DashBody = styled.div`
  padding: 0 0 0 50px;
  display: flex;
  flex-direction: column;
  svg { display: block; }
`;
const Heading = styled.h2`
  margin: ${(p) => p.$top}px 0 0;
  font-size: 20px;
  line-height: 28px;
  font-weight: 600;
  color: #d4d4d8;
`;
const Timeline = styled.div`
  margin: 44px 0 0 10px;
  width: 684px;
  height: 67px;
  display: flex;
`;
const Segment = styled.div`
  flex: ${(p) => p.$span};
  background: ${(p) => (p.$high ? "#fa4646" : "#424347")};
`;
const TimeAxis = styled.div`
  margin: 6px 0 0 64.5px;
  display: flex;
  height: 18px;
  font-size: 12px;
  line-height: 18px;
  color: #676b75;
`;
const Tick = styled.span`
  flex: none;
  width: 228.2px;
  text-align: center;
  font-weight: ${(p) => (p.$bold ? 700 : 400)};
`;
const Legend = styled.div`
  margin: 6px 0 1px;
  height: 20px;
  display: flex;
  align-items: center;
  gap: 19.5px;
  font-size: 14px;
`;
const LegendItem = styled.span`
  display: flex;
  align-items: center;
  gap: 5.5px;
`;
const Swatch = styled.i`
  width: 12px;
  height: 12px;
  border-radius: 1px;
  background: ${(p) => p.$c};
`;
const Reading = styled.div`
  display: grid;
  grid-template-columns: 16px auto;
  column-gap: 7px;
  align-items: center;
  justify-content: start;
  margin: ${(p) => p.$top}px 0 0 58.5px;
  height: 46px;
`;
const Dash = styled.i`
  width: 16px;
  height: 4px;
  border-radius: 2px;
  background: ${(p) => p.$c};
`;
const ReadName = styled.span`
  font-size: 12px;
  line-height: 18px;
  color: #cfcfd4;
`;
const ReadValue = styled.span`
  grid-column: 2;
  padding-bottom: 3px;
  font-size: 18.5px;
  line-height: 23px;
  color: #dcdce0;
  small { font-size: 13px; margin-left: 4px; color: #b9b9bf; }
`;
const AxisText = styled.text`
  font-family: "Noto Sans", sans-serif;
  font-size: 12px;
  fill: #7e7f88;
  text-anchor: ${(p) => p.$anchor};
  font-weight: ${(p) => (p.$bold ? 700 : 400)};
`;

const rep = (v, n) => Array(n).fill(v);
const speedCycle = [10, 9, 5, 5, 4, 3, 5, 6, ...rep(1, 12), 3, 3, 4, 7, 9];
const tempCycle = [-11, -17, -18, -29, -15, -25, -33, -20, ...rep(-21, 12), -29, -20, -16, -14, -24];

const LineChart = ({ cycle, ticks, y0, unit, v0, axisY, top, height, color, lead }) => {
  const y = (v) => y0 - (v - v0) * unit;
  const data = Array.from({ length: 89 }, (_, i) => [1723.9 + i * 6.663, y(cycle[i % 25])]);
  return (
    <svg width="680" height={height} viewBox={`1673 ${top} 680 ${height}`}>
      {ticks.map(([v, t]) => (
        <g key={t}>
          <line x1="1722.8" x2="2322" y1={Math.round(y(v) - 0.5) + 0.5} y2={Math.round(y(v) - 0.5) + 0.5} stroke="#6d6d74" strokeWidth="1.2" />
          <AxisText $anchor="end" x="1713" y={y(v) + 4}>
            {t}
          </AxisText>
        </g>
      ))}
      <line x1="1722.8" x2="2322" y1={axisY} y2={axisY} stroke="#d6d6da" strokeWidth="1.2" />
      <polyline points={[[1723, lead], ...data].map((p) => p.join(",")).join(" ")} fill="none" stroke={color} strokeWidth="1.5" />
      {data.map(([x, yy], i) => (
        <circle key={i} cx={x} cy={yy} r="1.4" fill={color} />
      ))}
      <AxisText $anchor="middle" x="1871.3" y={axisY + 18.5}>03:10</AxisText>
      <AxisText $anchor="middle" x="2070.6" y={axisY + 18.5}>03:15</AxisText>
      <AxisText $anchor="middle" $bold x="2270.5" y={axisY + 18.5}>03:20</AxisText>
    </svg>
  );
};

const segs = [62.3, 90.9, 99.1, 90.9, 99.1, 90.9, 99.1, 51.9];

const DashboardPanel = () => (
  <Panel>
    <PanelHeader icon={<DashIcon s={17} />} title="Dashboard" />
    <DashBody>
      <Heading $top={31}>Alarm Status</Heading>
      <Timeline>
        {segs.map((w, i) => (
          <Segment key={i} $span={w} $high={i % 2 === 1} />
        ))}
      </Timeline>
      <TimeAxis>
        <Tick>03:10</Tick>
        <Tick>03:15</Tick>
        <Tick $bold>03:20</Tick>
      </TimeAxis>
      <Legend>
        <LegendItem><Swatch $c="#fa4646" />High</LegendItem>
        <LegendItem><Swatch $c="#ff9243" />Medium</LegendItem>
        <LegendItem><Swatch $c="#d9d146" />Low</LegendItem>
        <LegendItem><Swatch $c="#424347" />Normal</LegendItem>
      </Legend>
      <Heading $top={30}>Property Detail</Heading>
      <LineChart
        cycle={speedCycle}
        ticks={[[12, "12"], [10, "10"], [8, "8.0"], [6, "6.0"], [4, "4.0"], [2, "2.0"], [0, "0.0"]]}
        y0={691.7} v0={0} unit={18.95} axisY={698.5} top={429} height={301} lead={506} color="#6accb8"
      />
      <Reading $top={2}>
        <Dash $c="#6accb8" />
        <ReadName>Speed</ReadName>
        <ReadValue>1<small>rpm</small></ReadValue>
      </Reading>
      <LineChart
        cycle={tempCycle}
        ticks={[[-10, "–10"], [-15, "–15"], [-20, "–20"], [-25, "–25"], [-30, "–30"], [-35, "–35"]]}
        y0={1063.7} v0={-35} unit={7.72} axisY={1086.5} top={778} height={340} lead={906} color="#f06ee8"
      />
      <Reading $top={2}>
        <Dash $c="#f06ee8" />
        <ReadName>Temperature</ReadName>
        <ReadValue>-21<small>°F</small></ReadValue>
      </Reading>
    </DashBody>
  </Panel>
);

const trail = ["Bakersville Central", "Equipment", "CookieLines", "COOKIE_LINE"];

export default function App() {
  return (
    <Page>
      <Global />
      <TopBar>
        <Brand>Cookie Factory</Brand>
        <Site>
          <Dot />
          Bakersville Central
          <Chevron />
        </Site>
        <Spacer />
        <User>
          <Avatar />
          <UserText>
            <UserName>Fran Williams</UserName>
            <UserRole>Operations Manager</UserRole>
          </UserText>
          <Chevron />
        </User>
        <BarEnd />
      </TopBar>
      <Crumbs>
        <Home>
          <Globe />
        </Home>
        {trail.map((t) => (
          <React.Fragment key={t}>
            <Arrow />
            <Crumb>{t}</Crumb>
          </React.Fragment>
        ))}
        <Arrow />
        <Crumb $current>FREEZER_TUNNEL</Crumb>
        <Spacer />
        <CloseAll />
      </Crumbs>
      <Columns>
        <ScenePanel />
        <ProcessPanel />
        <DashboardPanel />
      </Columns>
      <Dock>
        <DockButton><CubeIcon w={26} h={30} sw={3.2} />Scene</DockButton>
        <DockButton><ProcessIcon s={30} />Process</DockButton>
        <DockButton><DashIcon s={30} />Dashboard</DockButton>
      </Dock>
    </Page>
  );
}
